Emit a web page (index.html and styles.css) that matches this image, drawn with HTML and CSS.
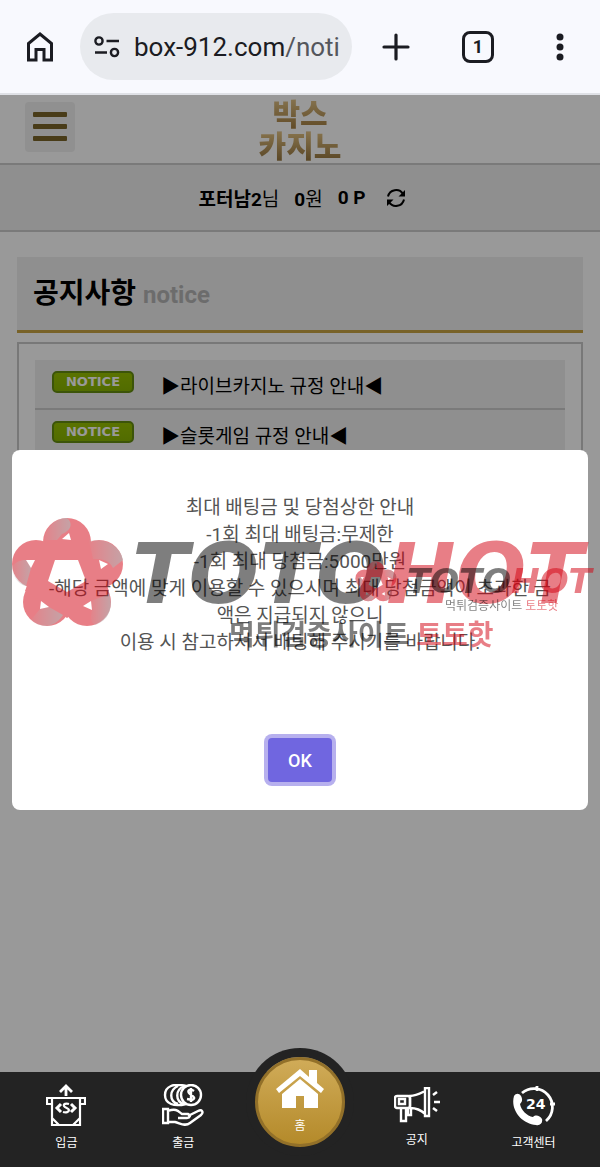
FILE: index.html
```
<!DOCTYPE html>
<html lang="ko">
<head>
<meta charset="utf-8">
<meta name="viewport" content="width=device-width, initial-scale=1">
<title>공지사항</title>
<link rel="stylesheet" href="styles.css">
</head>
<body>

<div class="browser">
    <button class="tool" aria-label="Home">
        <svg width="32" height="32" viewBox="0 0 32 32"><path d="M4.500 29V12.500L16 3l11.500 9.500V29H20V18.500h-8V29z" fill="none" stroke="#1b1c22" stroke-width="3"/></svg>
    </button>
    <button class="address">
        <svg width="26" height="22" viewBox="0 0 26 22" fill="none" stroke="#1b1c22" stroke-width="2.400"><circle cx="5" cy="5" r="3.600"/><path d="M12.500 5H25M1 16.500h12"/><circle cx="20.500" cy="16.500" r="3.600"/></svg>
        <span class="url">box-912.com<span class="path">/noti</span></span>
    </button>
    <div class="tools">
        <button class="tool" aria-label="New tab">
            <svg width="32" height="32" viewBox="0 0 32 32"><path d="M16 4v24M4 16h24" stroke="#1b1c22" stroke-width="3.200" stroke-linecap="round"/></svg>
        </button>
        <button class="tool tabs" aria-label="Tabs">1</button>
        <button class="tool" aria-label="Menu">
            <svg width="32" height="32" viewBox="0 0 32 32" fill="#1b1c22"><circle cx="16" cy="6" r="3.500"/><circle cx="16" cy="16" r="3.500"/><circle cx="16" cy="26" r="3.500"/></svg>
        </button>
    </div>
</div>

<div class="page">
    <header class="header">
        <button class="hamburger" aria-label="메뉴"><i></i><i></i><i></i></button>
        <a class="logo" href="#">박스<br>카지노</a>
    </header>

    <div class="user">
        <span><b>포터남2</b>님</span>
        <span><b>0</b>원</span>
        <b>0 P</b>
        <button class="refresh" aria-label="새로고침">
            <svg width="20" height="20" viewBox="0 0 20 20"><g fill="none" stroke="#000" stroke-width="2"><path d="M2 8.500A8.200 8.200 0 0 1 17 6"/><path d="M18 11.500A8.200 8.200 0 0 1 3 14"/></g><path d="M19 2v6.500h-6.500zM1 18v-6.500h6.500z"/></svg>
        </button>
    </div>

    <main class="content">
        <h1 class="title">공지사항 <small>notice</small></h1>
        <div class="board">
            <ul class="list">
                <li><span class="badge">NOTICE</span><a href="#">▶라이브카지노 규정 안내◀</a></li>
                <li><span class="badge">NOTICE</span><a href="#">▶슬롯게임 규정 안내◀</a></li>
            </ul>
        </div>
    </main>

    <!-- popup -->
    <div class="backdrop">
        <div class="modal" role="dialog" aria-modal="true">
            <p class="message">최대 배팅금 및 당첨상한 안내<br>
                -1회 최대 배팅금:무제한<br>
                -1회 최대 당첨금:5000만원<br>
                -해당 금액에 맞게 이용할 수 있으시며 최대 당첨금액이 초과한 금액은 지급되지 않으니<br>
                이용 시 참고하셔서 배팅해 주시기를 바랍니다.</p>
            <button class="ok">OK</button>
        </div>
        <svg class="watermark" viewBox="0 0 600 160">
            <defs>
                <linearGradient id="fold" x1="0" y1="0" x2="1" y2="0">
                    <stop offset="0" stop-color="#7a5a60" stop-opacity=".1"/>
                    <stop offset="1" stop-color="#7a5a60" stop-opacity=".8"/>
                </linearGradient>
                <mask id="holes" maskUnits="userSpaceOnUse" x="0" y="0" width="120" height="120">
                    <rect width="120" height="120" fill="#fff"/>
                    <path d="M44 43h23l8 21-19 11-19-11z"/>
                    <path d="M51 22l7-6 2 7zM15 43h9l-4 8zM88 43l9 4-7 5zM30 84l8 6-9 2zM80 84l1 9-9-4z"/>
                </mask>
                <g id="flower" mask="url(#holes)">
                    <g fill="#d3000f">
                        <circle cx="56" cy="25" r="24"/>
                        <circle cx="25" cy="47" r="24"/>
                        <circle cx="88" cy="47" r="24"/>
                        <circle cx="36" cy="85" r="24"/>
                        <circle cx="76" cy="85" r="24"/>
                        <path d="M30 30h52l16 44-42 27-42-27z"/>
                    </g>
                    <g fill="url(#fold)">
                        <path d="M33 23C35 9 45 1 56 1c7 6 3 13-5 16l-5 6z"/>
                        <path d="M78 23h10c13 1 22 10 24 20l-10 8c-4-8-10-9-20-9z"/>
                        <path d="M1 50c4-6 9-7 14-7l5 8-5 18C6 67 1 58 1 50z"/>
                        <path d="M20 103l9-11 9-2 14 8c-5 8-12 11-19 11-6-1-10-3-13-6z"/>
                        <path d="M80 84l18-7c5 14-1 27-14 31-6-4-4-10-3-15z"/>
                    </g>
                </g>
            </defs>
            <g opacity=".5">
                <use href="#flower" transform="translate(11 16)"/>
                <text class="mark" x="132" y="102"><tspan>TOTO</tspan><tspan class="red">HOT</tspan></text>
                <text class="mark-sub" x="229" y="144">먹튀검증사이트 <tspan class="red">토토핫</tspan></text>
            </g>
            <g opacity=".5">
                <use href="#flower" transform="translate(355 60) scale(.37)"/>
                <text class="mark small" x="407" y="92"><tspan>TOTO</tspan><tspan class="red">HOT</tspan></text>
                <text class="mark-sub small" x="445" y="109">먹튀검증사이트 <tspan class="red">토토핫</tspan></text>
            </g>
        </svg>
    </div>
</div>

<nav class="bottom">
    <a href="#">
        <svg width="40" height="42" viewBox="0 0 40 42" fill="none" stroke="#fff" stroke-width="2.200"><path d="M20 12V2M14 8l6-6 6 6" stroke-width="2.800"/><path d="M6 20H1v-6h38v6h-5"/><path d="M6 15v26h28V15M6 34l7 7M34 34l-7 7"/><path d="M15 20l-4 4 4 4M25 20l4 4-4 4" stroke-width="3"/><path d="M23 20c-3-1-6 0-5 2s5 2 5 4-3 3-6 2"/></svg>
        입금
    </a>
    <a href="#">
        <svg width="42" height="42" viewBox="0 0 42 42" fill="none" stroke="#fff" stroke-width="2.400"><circle cx="29" cy="11" r="10"/><path d="M24 2C12-1 3 2 3 11s9 12 21 9M16 2C7 6 7 17 16 20M22 2c-9 4-9 15 0 18"/><path d="M32 7c-4-3-8 0-4 3s6 4 2 6l-5-1M29 4v14"/><path d="M1 25h5v14H1zM6 27c8-3 10 0 14 3h6c3 1 2 4-1 4h-9M26 32l10-5c4-2 6 1 3 4L28 39c-5 4-10 0-15-1H6"/></svg>
        출금
    </a>
    <a class="home" href="#">
        <svg width="50" height="40" viewBox="0 0 50 40" fill="#fff"><path d="M25 0l9 8V1h8v13l7 6-3 4L25 7 4 24l-3-4z"/><path d="M25 10l18 15v14H29V27h-8v12H7V25z"/></svg>
        홈
    </a>
    <a class="news" href="#">
        <svg width="46" height="36" viewBox="0 0 46 36" fill="none" stroke="#fff" stroke-width="2.400"><rect x="1" y="9" width="15" height="12" rx="2"/><path d="M5 12h6v5H5zM16 9c6 0 11-3 15-5v23c-4-4-9-6-15-6zM31 1h4v28h-4zM7 21v13h5V21M14 22v6h3v-6"/><path d="M39 8l4-3M40 15h6M39 21l4 3" stroke-width="2.500"/></svg>
        공지
    </a>
    <a href="#">
        <svg width="44" height="42" viewBox="0 0 44 42" fill="none" stroke="#fff" stroke-width="2.800"><path d="M10 9a18 18 0 1 1 24 28M25 2v5M43 20h-5"/><path d="M2 12c2-3 5-3 7 0 2 4 1 6-1 8 1 6 7 12 13 13 3-3 7-1 9 2 1 4-2 7-6 6C10 40-2 26 2 12z" fill="#fff" stroke="none"/><text class="hours" x="14" y="25">24</text></svg>
        고객센터
    </a>
</nav>

</body>
</html>
```
FILE: styles.css
```
* {
    box-sizing: border-box;
}

body {
    margin: 0;
    min-height: 100vh;
    display: flex;
    flex-direction: column;
    background: #fff;
    color: #000;
    font-family: Roboto, "Noto Sans CJK KR", sans-serif;
    font-size: 19px;
}

button {
    padding: 0;
    border: 0;
    background: none;
    color: inherit;
    font-family: inherit;
    cursor: pointer;
}

a {
    color: inherit;
    text-decoration: none;
}

svg {
    display: block;
}

/* browser bar */
.browser {
    display: flex;
    align-items: center;
    height: 95px;
    padding: 0 24px;
    background: #f8f9fe;
    border-bottom: 2px solid #dfe1e6;
}

.tool {
    width: 32px;
    height: 32px;
}

.address {
    flex: 1;
    display: flex;
    align-items: center;
    gap: 14px;
    height: 67px;
    margin: 0 28px 0 24px;
    padding-left: 14px;
    border-radius: 34px;
    background: #e8eaee;
    overflow: hidden;
}

.url {
    color: #1b1c22;
    font-size: 26px;
    white-space: nowrap;
}

.path {
    color: #54565c;
}

.tools {
    display: flex;
    gap: 50px;
}

.tabs {
    border: 3px solid #1b1c22;
    border-radius: 8px;
    color: #1b1c22;
    font-size: 18px;
    font-weight: 700;
}

/* page */
.page {
    flex: 1;
    position: relative;
}

.header {
    display: grid;
    grid-template-columns: 1fr auto 1fr;
    align-items: center;
    height: 70px;
    padding: 0 25px;
    border-bottom: 2px solid #ccc;
}

.hamburger {
    display: flex;
    flex-direction: column;
    align-items: center;
    gap: 7px;
    width: 50px;
    height: 50px;
    padding-top: 10px;
    margin-bottom: 4px;
    border-radius: 4px;
    background: #f0f0f1;
}

.hamburger i {
    width: 34px;
    height: 5px;
    border-radius: 1px;
    background: #7b6428;
}

.logo {
    padding-top: 4px;
    background: linear-gradient(#e6c98e, #a37d40 50%, #e0bf80 55%, #90703a);
    background-clip: text;
    -webkit-background-clip: text;
    color: transparent;
    font-size: 30px;
    font-weight: 900;
    line-height: 32px;
    text-align: center;
}

.user {
    display: flex;
    align-items: center;
    justify-content: center;
    gap: 15px;
    height: 67px;
    padding-left: 4px;
    background: #eee;
    border-bottom: 2px solid #ccc;
}

.refresh {
    margin-left: 5px;
}

.content {
    padding: 25px 17px;
}

.title {
    margin: 0 0 9px;
    padding: 2px 0 0 16px;
    border-bottom: 3px solid #c9a443;
    background: #eee;
    font-size: 28px;
    line-height: 69px;
}

.title small {
    color: #b5b5b5;
    font-size: 24px;
}

.board {
    padding: 16px;
    border: 2px solid #c8c8c8;
}

.list {
    margin: 0;
    padding: 0;
    list-style: none;
}

.list li {
    display: flex;
    align-items: center;
    gap: 27px;
    height: 50px;
    padding-left: 17px;
    border-bottom: 2px solid #ccc;
    background: #eee;
}

.badge {
    width: 82px;
    margin-bottom: 5px;
    border: 2px solid #648c10;
    border-radius: 5px;
    background: linear-gradient(#96c000, #88b400);
    color: #fff;
    font-family: "DejaVu Sans", sans-serif;
    font-size: 13px;
    font-weight: 700;
    line-height: 18px;
    text-align: center;
}

/* popup */
.backdrop {
    position: absolute;
    top: 0;
    left: 0;
    width: 100%;
    height: calc(100vh - 95px);
    display: flex;
    align-items: center;
    padding: 0 12px 2px;
    background: rgba(0, 0, 0, .4);
}

.modal {
    display: flex;
    flex-direction: column;
    align-items: center;
    width: 100%;
    padding: 44px 32px 28px;
    border-radius: 8px;
    background: #fff;
    color: #545454;
}

.message {
    margin: 0 0 82px;
    line-height: 27px;
    text-align: center;
}

.ok {
    width: 64px;
    height: 44px;
    border-radius: 4px;
    box-shadow: 0 0 0 4px #b7b0ee;
    background: #7066e0;
    color: #fff;
    font-size: 18px;
    font-weight: 500;
}

.watermark {
    position: absolute;
    left: 0;
    top: calc(50% - 130px);
    width: 100%;
    pointer-events: none;
}

.mark {
    font-family: "DejaVu Sans", sans-serif;
    font-size: 83px;
    font-style: italic;
    font-weight: 700;
}

.mark.small {
    font-size: 34px;
}

.mark-sub {
    font-size: 28px;
    font-weight: 700;
}

.mark-sub.small {
    font-size: 12px;
    font-weight: 400;
}

.red {
    fill: #d3000f;
}

/* bottom menu */
.bottom {
    position: sticky;
    bottom: 0;
    display: grid;
    grid-template-columns: repeat(5, 1fr);
    height: 95px;
    padding: 0 8px;
    background: #232323;
    color: #fff;
    font-size: 12px;
    line-height: 18px;
}

.bottom a {
    display: flex;
    flex-direction: column;
    align-items: center;
    gap: 8px;
    padding-top: 12px;
}

.bottom .news {
    padding-top: 15px;
}

.bottom .home {
    justify-self: center;
    width: 90px;
    height: 90px;
    margin-top: -15px;
    padding-top: 9px;
    border: 3px solid #927029;
    border-radius: 50%;
    box-shadow: 0 0 0 9px #232323;
    background: linear-gradient(#d0ab58, #b48a2a);
}

.hours {
    fill: #fff;
    stroke: none;
    font-family: "DejaVu Sans", sans-serif;
    font-size: 14px;
    font-weight: 700;
}
```
